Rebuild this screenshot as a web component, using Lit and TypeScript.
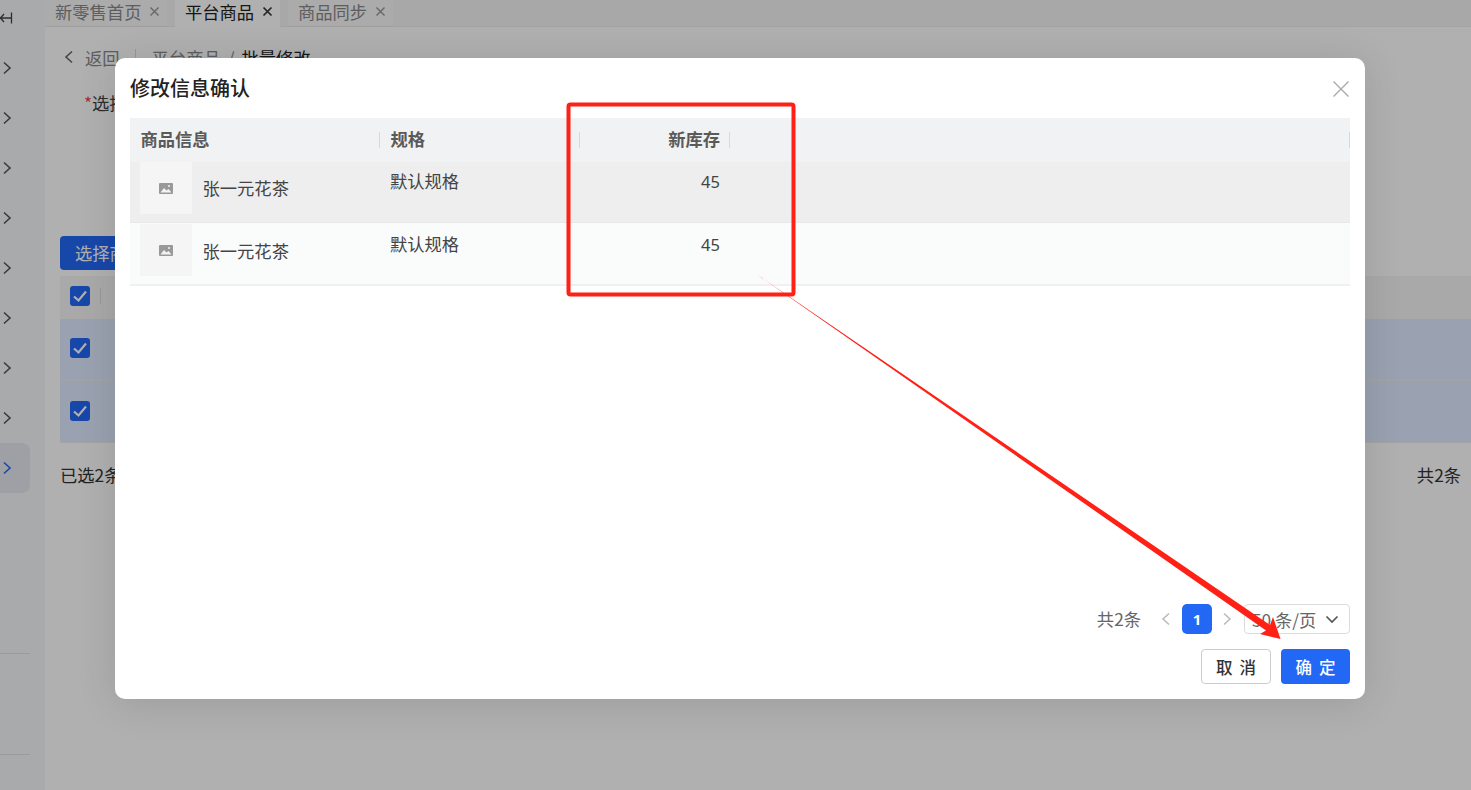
import { LitElement, html, css, svg } from "lit";
import { customElement } from "lit/decorators.js";

const chev = (cls = "") => html`<svg class="chev ${cls}" width="10" height="14" viewBox="0 0 10 14"><path d="M2 1.5 L8 7 L2 12.5" fill="none" stroke="currentColor" stroke-width="1.6"/></svg>`;
const check = html`<span class="cb"><svg width="20" height="20" viewBox="0 0 20 20"><path d="M4 10.5 L8.5 14.5 L16 5.5" fill="none" stroke="#fff" stroke-width="2.2"/></svg></span>`;
const imgIcon = html`<svg width="14" height="11" viewBox="0 0 14 11"><rect width="14" height="11" rx="1" fill="#999"/><path d="M1.5 9.5 L5 5 L7.5 7.5 L9.5 6 L12.5 9.5 Z" fill="#f3f3f3"/><circle cx="10" cy="3" r="1" fill="#f3f3f3"/></svg>`;

const rows = [{ cls: "r1" }, { cls: "r2" }];

@customElement("app-root")
export class AppRoot extends LitElement {
  static styles = css`
    :host {
      display: block;
      position: relative;
      width: 100%;
      height: 100vh;
      overflow: hidden;
      font-family: "Noto Sans CJK SC", "Noto Sans", sans-serif;
      color: #333;
      background: #fff;
    }
    .page { display: flex; height: 100%; }
    .side {
      width: 45px;
      flex: none;
      background: #f5f6f9;
      display: flex;
      flex-direction: column;
      color: #555;
      box-sizing: border-box;
      padding-top: 9px;
    }
    .fold { height: 18px; color: #444; }
    .sideitem { width: 30px; height: 50px; display: flex; align-items: center; padding-left: 2px; box-sizing: border-box; border-radius: 0 8px 8px 0; }
    .sideitems { margin-top: 16px; display: flex; flex-direction: column; }
    .sideitem.on { background: #e6e8ef; color: #2268f5; }
    .sideline { width: 30px; height: 1px; background: #e0e0e0; }
    .main { flex: 1; min-width: 0; display: flex; flex-direction: column; }
    .tabs { display: flex; height: 27px; gap: 8px; background: #f4f4f5; flex: none; box-shadow: inset 0 -1px 0 #eee; }
    .tab { display: flex; align-items: center; gap: 8px; padding: 0 7px 4px 10px; font-size: 17.3px; color: #888; background: #f8f8f9; border-bottom: 1px solid #e6e6e6; box-sizing: border-box; width: 122px; white-space: nowrap; }
    .tab.t2, .tab.t3 { width: 105px; }
    .tab.on { color: #222; background: #fff; border-bottom: none; }
    .tab svg { flex: none; }
    .crumb { display: flex; align-items: center; height: 60px; padding-left: 19px; font-size: 17.3px; color: #888; flex: none; }
    .crumb .back { color: #666; margin-right: 11px; transform: scaleX(-1); display: flex; }
    .crumb .sep { width: 1px; height: 16px; background: #ddd; margin: 0 16px 0 15px; }
    .crumb b { font-weight: 400; color: #222; }
    .crumb .slash { margin: 0 7px; }
    .form { padding: 0 0 2px 39px; font-size: 17.3px; color: #444; height: 32px; display: flex; align-items: center; flex: none; box-sizing: border-box; }
    .form i { color: #e5484d; font-style: normal; }
    .bgbtn { margin: 117px 0 0 15px; width: 90px; height: 34px; border-radius: 4px; background: #2268f5; color: #fff; font-size: 17.3px; display: flex; align-items: center; padding: 0 0 2px 15px; box-sizing: border-box; flex: none; white-space: nowrap; overflow: hidden; }
    .bgtable { margin: 6px 0 0 15px; flex: none; }
    .bghead { height: 43px; background: #f5f5f5; display: flex; align-items: center; padding: 0 0 3px 10px; gap: 10px; box-sizing: border-box; }
    .bghead .d { width: 1px; height: 16px; background: #ddd; }
    .bgrow { height: 62px; background: #e0e9ff; border-bottom: 1px solid #eee; display: flex; align-items: center; padding: 0 0 3px 10px; box-sizing: border-box; }
    .bgrow + .bgrow { padding-bottom: 1px; }
    .cb { width: 20px; height: 20px; border-radius: 3px; background: #2268f5; display: block; flex: none; }
    .cb svg { display: block; }
    .bgfoot { display: flex; justify-content: space-between; margin: 19px 10px 0 15px; font-size: 17.3px; color: #333; }
    .scrim {
      position: absolute;
      inset: 0;
      background: rgba(0, 0, 0, 0.31);
      padding: 58px 0 0 115px;
      box-sizing: border-box;
    }
    .modal {
      width: 1250px;
      height: 641px;
      background: #fff;
      border-radius: 10px;
      box-shadow: 0 4px 40px rgba(0, 0, 0, 0.12);
      display: flex;
      flex-direction: column;
      padding: 0 15px;
      box-sizing: border-box;
    }
    .mhead { height: 60px; display: flex; align-items: center; justify-content: space-between; flex: none; }
    .mtitle { font-size: 20px; font-weight: 500; color: #222; line-height: 60px; }
    .close { display: block; margin-top: 1px; }
    .grid { display: grid; grid-template-columns: 250px 200px 150px 1fr; flex: none; }
    .th { height: 44px; background: #f1f2f4; display: flex; align-items: center; justify-content: space-between; font-size: 17.3px; font-weight: 700; color: #5a5a5a; padding-left: 10.5px; box-sizing: border-box; }
    .th > span:first-child { position: relative; top: -1.5px; }
    .th.num { padding-left: 0; }
    .th.num span:first-child { flex: 1; text-align: right; padding-right: 9px; }
    .th .d { width: 1px; height: 16px; background: #d8d9dc; flex: none; }
    .td { font-size: 17.3px; color: #444; box-sizing: border-box; }
    .r1 { background: #eeeeee; height: 61px; border-bottom: 1px solid #e8e8e8; }
    .r2 { background: #fafbfb; height: 63px; border-bottom: 2px solid #f0f0f0; }
    .td.info { display: flex; padding-left: 10px; }
    .r2.info { padding-top: 1px; }
    .thumb { width: 52px; height: 52px; background: #f5f5f5; display: flex; align-items: center; justify-content: center; flex: none; box-sizing: border-box; }
    .name { margin: 13px 0 0 10.5px; line-height: 26px; }
    .r2 .name { margin-top: 14px; }
    .spec { padding: 7px 0 0 10px; line-height: 24px; }
    .r2.spec { padding-top: 9px; }
    .stock { padding: 7.5px 10px 0 0; text-align: right; line-height: 24px; font-family: "Noto Sans", sans-serif; font-size: 16.5px; }
    .r2.stock { padding-top: 10px; }
    .spacer { flex: 1; }
    .pager { display: flex; align-items: center; justify-content: flex-end; height: 30px; font-size: 17.3px; color: #666; flex: none; }
    .pager .total { margin: 0 20px 2px 0; }
    .pg { color: #bbb; display: flex; }
    .pg.prev { transform: scaleX(-1); }
    .cur { width: 30px; height: 30px; border-radius: 5px; background: #2268f5; color: #fff; font-size: 15px; font-weight: 700; display: flex; align-items: center; justify-content: center; margin: 0 10px 0 11px; font-family: "Noto Sans", sans-serif; }
    .size { width: 106px; height: 30px; border: 1px solid #dcdcdc; border-radius: 4px; margin-left: 12px; box-sizing: border-box; display: flex; align-items: center; justify-content: space-between; padding: 0 10px 0 7px; color: #666; white-space: nowrap; }
    .foot { display: flex; justify-content: flex-end; gap: 10px; margin: 15px 0 15px; flex: none; }
    .btn { height: 35px; border-radius: 4px; font-size: 16.5px; font-weight: 500; display: flex; align-items: center; justify-content: center; box-sizing: border-box; letter-spacing: 7px; padding-left: 7px; }
    .btn.cancel { width: 70px; border: 1px solid #ccc; color: #333; background: #fff; }
    .btn.ok { width: 69px; background: #2268f5; color: #fff; }
    .mark { position: absolute; left: 0; top: 0; pointer-events: none; }
  `;

  render() {
    return html`
      <div class="page">
        <aside class="side">
          <svg class="fold" width="14" height="18" viewBox="0 0 14 18"><path d="M0 9 H11 M4 5 L0.5 9 L4 13 M11.5 3.5 V14.5" fill="none" stroke="#444" stroke-width="1.3"/></svg>
          <div class="sideitems">
            ${[0, 1, 2, 3, 4, 5, 6, 7].map(() => html`<div class="sideitem">${chev()}</div>`)}
            <div class="sideitem on">${chev()}</div>
            <div class="sideline" style="margin-top:160px"></div>
            <div class="sideline" style="margin-top:100px"></div>
          </div>
        </aside>
        <main class="main">
          <div class="tabs">
            <div class="tab">新零售首页<svg width="11" height="11" viewBox="0 0 11 11"><path d="M1.5 1.5 L9.5 9.5 M9.5 1.5 L1.5 9.5" stroke="#999" stroke-width="1.5"/></svg></div>
            <div class="tab t2 on">平台商品<svg width="11" height="11" viewBox="0 0 11 11"><path d="M1.5 1.5 L9.5 9.5 M9.5 1.5 L1.5 9.5" stroke="#333" stroke-width="1.7"/></svg></div>
            <div class="tab t3">商品同步<svg width="11" height="11" viewBox="0 0 11 11"><path d="M1.5 1.5 L9.5 9.5 M9.5 1.5 L1.5 9.5" stroke="#999" stroke-width="1.5"/></svg></div>
          </div>
          <div class="crumb"><span class="back">${chev()}</span>返回<span class="sep"></span>平台商品<span class="slash">/</span><b>批量修改</b></div>
          <div class="form"><i>*</i>选择商品</div>
          <div class="bgbtn">选择商品</div>
          <div class="bgtable">
            <div class="bghead">${check}<span class="d"></span></div>
            <div class="bgrow">${check}</div>
            <div class="bgrow">${check}</div>
          </div>
          <div class="bgfoot"><span>已选2条</span><span>共2条</span></div>
        </main>
      </div>
      <div class="scrim">
        <section class="modal">
          <header class="mhead">
            <div class="mtitle">修改信息确认</div>
            <svg class="close" width="18" height="18" viewBox="0 0 18 18"><path d="M1.5 1.5 L16.5 16.5 M16.5 1.5 L1.5 16.5" stroke="#aaa" stroke-width="1.4"/></svg>
          </header>
          <div class="grid">
            <div class="th"><span>商品信息</span><span class="d"></span></div>
            <div class="th"><span>规格</span><span class="d"></span></div>
            <div class="th num"><span>新库存</span><span class="d"></span></div>
            <div class="th"><span></span><span class="d"></span></div>
            ${rows.map(
              (r) => html`
                <div class="td info ${r.cls}"><div class="thumb">${imgIcon}</div><div class="name">张一元花茶</div></div>
                <div class="td spec ${r.cls}">默认规格</div>
                <div class="td stock ${r.cls}">45</div>
                <div class="td ${r.cls}"></div>
              `
            )}
          </div>
          <div class="spacer"></div>
          <div class="pager">
            <span class="total">共2条</span>
            <span class="pg prev">${chev()}</span>
            <span class="cur">1</span>
            <span class="pg">${chev()}</span>
            <div class="size"><span>50 条/页</span><svg width="14" height="9" viewBox="0 0 14 9"><path d="M1.5 1.5 L7 7 L12.5 1.5" fill="none" stroke="#555" stroke-width="1.7"/></svg></div>
          </div>
          <div class="foot">
            <div class="btn cancel">取消</div>
            <div class="btn ok">确定</div>
          </div>
        </section>
      </div>
      <svg class="mark" width="1471" height="790" viewBox="0 0 1471 790">
        ${svg`<rect x="568.5" y="104.5" width="225" height="190" rx="2" fill="none" stroke="#ff2116" stroke-width="4"/>
        <path d="M757 274.5 L1270 625 L1273 617 L1280.5 639 L1260 634 L1266 630.5 Z" fill="#ff2116"/>`}
      </svg>
    `;
  }
}
